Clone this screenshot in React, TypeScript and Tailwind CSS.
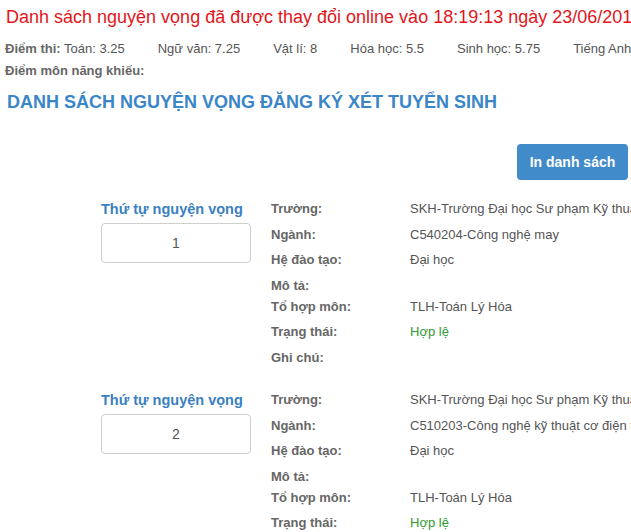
import React from 'react';

interface Choice {
  order: number;
  school: string;
  major: string;
  level: string;
  description: string;
  combo: string;
  status: string;
  note: string;
}

const scores = [
  { name: 'Ngữ văn', value: '7.25' },
  { name: 'Vật lí', value: '8' },
  { name: 'Hóa học', value: '5.5' },
  { name: 'Sinh học', value: '5.75' },
  { name: 'Tiếng Anh', value: '6.4' },
];

const choices: Choice[] = [
  {
    order: 1,
    school: 'SKH-Trường Đại học Sư phạm Kỹ thuật Hưng Yên',
    major: 'C540204-Công nghệ may',
    level: 'Đại học',
    description: '',
    combo: 'TLH-Toán Lý Hóa',
    status: 'Hợp lệ',
    note: '',
  },
  {
    order: 2,
    school: 'SKH-Trường Đại học Sư phạm Kỹ thuật Hưng Yên',
    major: 'C510203-Công nghệ kỹ thuật cơ điện tử',
    level: 'Đại học',
    description: '',
    combo: 'TLH-Toán Lý Hóa',
    status: 'Hợp lệ',
    note: '',
  },
];

const ChoiceBlock: React.FC<{ choice: Choice }> = ({ choice }) => {
  const rows = [
    { label: 'Trường:', value: choice.school, gap: 'mt-0' },
    { label: 'Ngành:', value: choice.major, gap: 'mt-[6px]' },
    { label: 'Hệ đào tạo:', value: choice.level, gap: 'mt-[5px]' },
    { label: 'Mô tả:', value: choice.description, gap: 'mt-[6px]' },
    { label: 'Tổ hợp môn:', value: choice.combo, gap: 'mt-[1px]' },
    { label: 'Trạng thái:', value: choice.status, gap: 'mt-[5px]', green: true },
    { label: 'Ghi chú:', value: choice.note, gap: 'mt-[6px]' },
  ];

  return (
    <div className="flex">
      {/* Order column */}
      <div className="ml-[101px] w-[150px] shrink-0">
        <div className="h-[20px] leading-[20px] text-[14.5px] font-bold text-[#3a80c2] whitespace-nowrap">
          Thứ tự nguyện vọng
        </div>
        <div className="mt-[4px] h-[40px] border border-[#cfcfcf] rounded-[4px] bg-white flex items-center justify-center text-[14px] text-[#555]">
          {choice.order}
        </div>
      </div>

      {/* Details */}
      <div className="ml-[20px] flex flex-col text-[13px]">
        {rows.map((row) => (
          <div key={row.label} className={`flex h-[20px] leading-[20px] whitespace-nowrap ${row.gap}`}>
            <div className="w-[139px] shrink-0 font-bold text-[#666]">{row.label}</div>
            <div className={row.green ? 'text-[#2f9a2f]' : 'text-[#555]'}>{row.value}</div>
          </div>
        ))}
      </div>
    </div>
  );
};

const App: React.FC = () => {
  return (
    <div className="w-[631px] h-[532px] overflow-hidden bg-white font-['Liberation_Sans',Arial,sans-serif]">
      {/* Change notice */}
      <div className="pt-[7px] pl-[6px] h-[27px] leading-[20px] text-[18px] text-[#e3151a] whitespace-nowrap">
        Danh sách nguyện vọng đã được thay đổi online vào 18:19:13 ngày 23/06/2017
      </div>

      {/* Scores */}
      <div className="mt-[11px] pl-[5px] text-[13px] leading-[22px] text-[#555] whitespace-nowrap flex">
        <span>
          <b className="text-[#666]">Điểm thi:</b> Toán: 3.25
        </span>
        {scores.map((s) => (
          <span key={s.name} className="ml-[33px]">
            {s.name}: {s.value}
          </span>
        ))}
      </div>
      <div className="pl-[5px] text-[13px] leading-[22px] font-bold text-[#666]">Điểm môn năng khiếu:</div>

      {/* Heading */}
      <h2 className="mt-[10px] pl-[7px] text-[18px] leading-[20px] font-bold text-[#3a86c8] whitespace-nowrap">
        DANH SÁCH NGUYỆN VỌNG ĐĂNG KÝ XÉT TUYỂN SINH
      </h2>

      {/* Print button */}
      <div className="mt-[32px] flex justify-end pr-[3px]">
        <button className="w-[111px] h-[36px] rounded-[4px] bg-[#428bca] text-white text-[14px] font-bold">
          In danh sách
        </button>
      </div>

      {/* Choices */}
      <div className="mt-[19px] flex flex-col gap-[22px]">
        {choices.map((c) => (
          <ChoiceBlock key={c.order} choice={c} />
        ))}
      </div>
    </div>
  );
};

export default App;
